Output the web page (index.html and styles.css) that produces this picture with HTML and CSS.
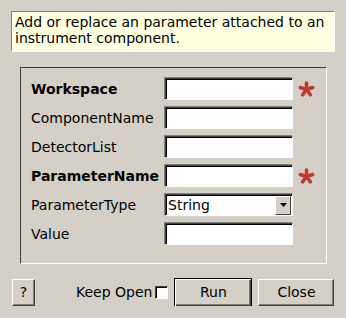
FILE: index.html
```html
<!DOCTYPE html>
<html lang="en">
<head>
    <meta charset="UTF-8">
    <title>SetInstrumentParameter</title>
    <link rel="stylesheet" href="styles.css">
</head>
<body>
    <div class="description">Add or replace an parameter attached to an instrument component.</div>

    <div class="frame">
        <div class="label bold">Workspace</div>
        <div class="field"></div>
        <svg class="star" width="17" height="16" viewBox="0 0 17 16">
            <g stroke="#bd3a2c" stroke-width="3.6" stroke-linecap="round">
                <line x1="8.5" y1="8.5" x2="8.5" y2="2"/>
                <line x1="8.5" y1="8.5" x2="14.7" y2="6.5"/>
                <line x1="8.5" y1="8.5" x2="12.3" y2="13.8"/>
                <line x1="8.5" y1="8.5" x2="4.7" y2="13.8"/>
                <line x1="8.5" y1="8.5" x2="2.3" y2="6.5"/>
            </g>
        </svg>

        <div class="label">ComponentName</div>
        <div class="field"></div>
        <span></span>

        <div class="label">DetectorList</div>
        <div class="field"></div>
        <span></span>

        <div class="label bold">ParameterName</div>
        <div class="field"></div>
        <svg class="star" width="17" height="16" viewBox="0 0 17 16">
            <g stroke="#bd3a2c" stroke-width="3.6" stroke-linecap="round">
                <line x1="8.5" y1="8.5" x2="8.5" y2="2"/>
                <line x1="8.5" y1="8.5" x2="14.7" y2="6.5"/>
                <line x1="8.5" y1="8.5" x2="12.3" y2="13.8"/>
                <line x1="8.5" y1="8.5" x2="4.7" y2="13.8"/>
                <line x1="8.5" y1="8.5" x2="2.3" y2="6.5"/>
            </g>
        </svg>

        <div class="label">ParameterType</div>
        <div class="field combo">
            <span class="combo-text">String</span>
            <span class="combo-arrow">
                <svg width="7" height="4" viewBox="0 0 7 4"><polygon points="0,0 7,0 3.5,4" fill="#000"/></svg>
            </span>
        </div>
        <span></span>

        <div class="label">Value</div>
        <div class="field"></div>
        <span></span>
    </div>

    <div class="buttons">
        <div class="btn help">?</div>
        <div class="keep">Keep Open <span class="check"></span></div>
        <div class="btn run"><span>Run</span></div>
        <div class="btn close">Close</div>
    </div>
</body>
</html>
```

FILE: styles.css
```css
body {
    margin: 0;
    padding: 11px 11px 0 11px;
    background: #d4d0c8;
    font-family: "DejaVu Sans", sans-serif;
    font-size: 14px;
    color: #000;
}
.description {
    box-sizing: border-box;
    width: 324px;
    height: 41px;
    padding: 2px 3px;
    line-height: 16px;
    background: #ffffe1;
    border: 1px solid;
    border-color: #808080 #ffffff #ffffff #808080;
}
.frame {
    box-sizing: border-box;
    margin: 15px 0 0 9px;
    width: 307px;
    height: 197px;
    padding: 10px 0 0 10px;
    border: 1px solid;
    border-color: #404040 #ffffff #ffffff #404040;
    display: grid;
    grid-template-columns: 129px 128px 17px;
    grid-auto-rows: 22px;
    column-gap: 5px;
    row-gap: 7px;
    align-items: center;
}
.label {
    line-height: 22px;
    white-space: nowrap;
}
.bold {
    font-weight: bold;
}
.field {
    box-sizing: border-box;
    height: 22px;
    background: #fff;
    border: 1px solid;
    border-color: #404040 #ffffff #ffffff #404040;
    box-shadow: inset 1px 1px 0 #000, -1px -1px 0 #808080;
}
.combo {
    display: flex;
    align-items: center;
    justify-content: space-between;
    padding: 0 1px 0 2px;
}
.combo-text {
    line-height: 18px;
}
.combo-arrow {
    box-sizing: border-box;
    width: 16px;
    height: 19px;
    background: #d4d0c8;
    border: 1px solid;
    border-color: #ffffff #404040 #404040 #ffffff;
    display: flex;
    align-items: center;
    justify-content: center;
}
.star {
    display: block;
}
.buttons {
    display: flex;
    align-items: center;
    margin-top: 14px;
    height: 28px;
}
.btn {
    box-sizing: border-box;
    flex: none;
    display: flex;
    align-items: center;
    justify-content: center;
    background: #d4d0c8;
    border: 1px solid;
    border-color: #ffffff #404040 #404040 #ffffff;
    box-shadow: inset -1px -1px 0 #808080;
}
.help {
    margin-left: 1px;
    width: 23px;
    height: 27px;
}
.keep {
    flex: none;
    display: flex;
    align-items: center;
    margin-left: 41px;
    white-space: nowrap;
}
.check {
    display: inline-block;
    box-sizing: border-box;
    width: 13px;
    height: 13px;
    margin-left: 3px;
    background: #fff;
    border: 1px solid;
    border-color: #404040 #ffffff #ffffff #404040;
    box-shadow: inset 1px 1px 0 #000;
}
.run {
    margin-left: 6px;
    width: 78px;
    height: 29px;
    border: 1px solid #000;
    box-shadow: inset 1px 1px 0 #fff, inset -1px -1px 0 #404040, inset -2px -2px 0 #808080;
}
.close {
    margin-left: 6px;
    width: 76px;
    height: 27px;
}
```
